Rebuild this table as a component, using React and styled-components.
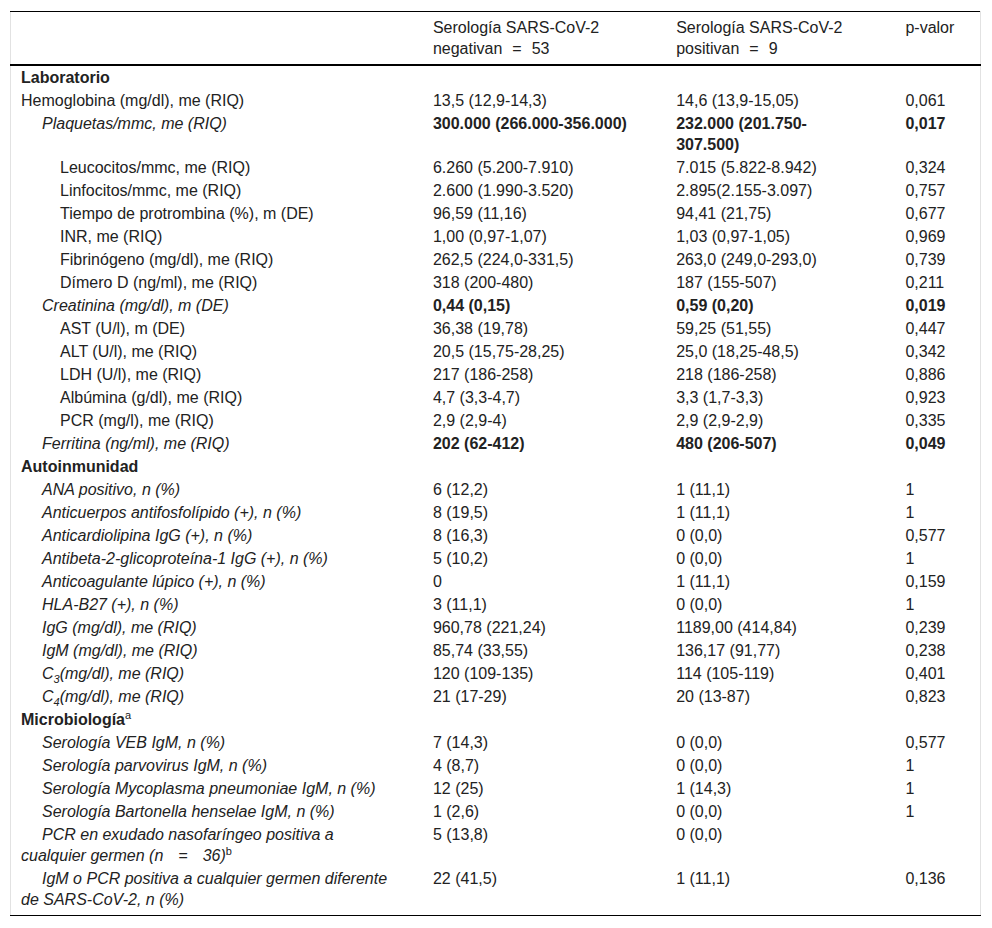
import React from "react";
import styled, {createGlobalStyle} from "styled-components";

const GlobalStyle = createGlobalStyle`
  body {
    margin: 0;
    background: #fff;
    font-family: "Liberation Sans", Arial, sans-serif;
    color: #222;
  }
`;

const Page = styled.div`
  padding: 11px 11px 12px 10px;
`;

const Table = styled.table`
  width: 971px;
  border-collapse: collapse;
  table-layout: fixed;
  font-size: 16px;
  line-height: 21px;
  border-top: 1px solid #000;
  border-bottom: 1px solid #000;
  border-left: 1px solid #e2e2e2;
  border-right: 1px solid #e2e2e2;
`;

const HeadCell = styled.th`
  font-weight: normal;
  text-align: left;
  vertical-align: top;
  padding: 5px 10px;
  border-bottom: 2px solid #000;
`;

const Cell = styled.td`
  vertical-align: top;
  padding: ${p => p.$last ? '1px 10px 5px' : '1px 10px'};
  font-weight: ${p => p.$bold ? 'bold' : 'normal'};
  &:nth-child(3) {
    padding-right: 32px;
  }
`;

const Label = styled.td`
  vertical-align: top;
  padding: ${p => p.$last ? '1px 22px 5px 10px' : '1px 22px 1px 10px'};
  font-weight: ${p => p.$kind === 'section' ? 'bold' : 'normal'};
  font-style: ${p => p.$kind === 'italic' ? 'italic' : 'normal'};
  text-indent: ${p => p.$kind === 'italic' ? '21px' : p.$kind === 'sub' ? '39px' : '0'};
`;

const Eq = styled.span`
  margin: 0 ${p => p.$wide ? '15px' : '10px'};
`;

const Sup = styled.sup`
  font-size: 11px;
  line-height: 0;
  font-weight: normal;
  font-style: normal;
`;

const Sub = styled.sub`
  font-size: 11px;
  line-height: 0;
`;

const rows = [
    {label: 'Laboratorio', kind: 'section'},
    {label: 'Hemoglobina (mg/dl), me (RIQ)', kind: 'plain', v: ['13,5 (12,9-14,3)', '14,6 (13,9-15,05)', '0,061']},
    {label: 'Plaquetas/mmc, me (RIQ)', kind: 'italic', bold: true, v: ['300.000 (266.000-356.000)', '232.000 (201.750-307.500)', '0,017']},
    {label: 'Leucocitos/mmc, me (RIQ)', kind: 'sub', v: ['6.260 (5.200-7.910)', '7.015 (5.822-8.942)', '0,324']},
    {label: 'Linfocitos/mmc, me (RIQ)', kind: 'sub', v: ['2.600 (1.990-3.520)', '2.895(2.155-3.097)', '0,757']},
    {label: 'Tiempo de protrombina (%), m (DE)', kind: 'sub', v: ['96,59 (11,16)', '94,41 (21,75)', '0,677']},
    {label: 'INR, me (RIQ)', kind: 'sub', v: ['1,00 (0,97-1,07)', '1,03 (0,97-1,05)', '0,969']},
    {label: 'Fibrinógeno (mg/dl), me (RIQ)', kind: 'sub', v: ['262,5 (224,0-331,5)', '263,0 (249,0-293,0)', '0,739']},
    {label: 'Dímero D (ng/ml), me (RIQ)', kind: 'sub', v: ['318 (200-480)', '187 (155-507)', '0,211']},
    {label: 'Creatinina (mg/dl), m (DE)', kind: 'italic', bold: true, v: ['0,44 (0,15)', '0,59 (0,20)', '0,019']},
    {label: 'AST (U/l), m (DE)', kind: 'sub', v: ['36,38 (19,78)', '59,25 (51,55)', '0,447']},
    {label: 'ALT (U/l), me (RIQ)', kind: 'sub', v: ['20,5 (15,75-28,25)', '25,0 (18,25-48,5)', '0,342']},
    {label: 'LDH (U/l), me (RIQ)', kind: 'sub', v: ['217 (186-258)', '218 (186-258)', '0,886']},
    {label: 'Albúmina (g/dl), me (RIQ)', kind: 'sub', v: ['4,7 (3,3-4,7)', '3,3 (1,7-3,3)', '0,923']},
    {label: 'PCR (mg/l), me (RIQ)', kind: 'sub', v: ['2,9 (2,9-4)', '2,9 (2,9-2,9)', '0,335']},
    {label: 'Ferritina (ng/ml), me (RIQ)', kind: 'italic', bold: true, v: ['202 (62-412)', '480 (206-507)', '0,049']},
    {label: 'Autoinmunidad', kind: 'section'},
    {label: 'ANA positivo, n (%)', kind: 'italic', v: ['6 (12,2)', '1 (11,1)', '1']},
    {label: 'Anticuerpos antifosfolípido (+), n (%)', kind: 'italic', v: ['8 (19,5)', '1 (11,1)', '1']},
    {label: 'Anticardiolipina IgG (+), n (%)', kind: 'italic', v: ['8 (16,3)', '0 (0,0)', '0,577']},
    {label: 'Antibeta-2-glicoproteína-1 IgG (+), n (%)', kind: 'italic', v: ['5 (10,2)', '0 (0,0)', '1']},
    {label: 'Anticoagulante lúpico (+), n (%)', kind: 'italic', v: ['0', '1 (11,1)', '0,159']},
    {label: 'HLA-B27 (+), n (%)', kind: 'italic', v: ['3 (11,1)', '0 (0,0)', '1']},
    {label: 'IgG (mg/dl), me (RIQ)', kind: 'italic', v: ['960,78 (221,24)', '1189,00 (414,84)', '0,239']},
    {label: 'IgM (mg/dl), me (RIQ)', kind: 'italic', v: ['85,74 (33,55)', '136,17 (91,77)', '0,238']},
    {label: <>C<Sub>3</Sub>(mg/dl), me (RIQ)</>, kind: 'italic', v: ['120 (109-135)', '114 (105-119)', '0,401']},
    {label: <>C<Sub>4</Sub>(mg/dl), me (RIQ)</>, kind: 'italic', v: ['21 (17-29)', '20 (13-87)', '0,823']},
    {label: <>Microbiología<Sup>a</Sup></>, kind: 'section'},
    {label: 'Serología VEB IgM, n (%)', kind: 'italic', v: ['7 (14,3)', '0 (0,0)', '0,577']},
    {label: 'Serología parvovirus IgM, n (%)', kind: 'italic', v: ['4 (8,7)', '0 (0,0)', '1']},
    {label: 'Serología Mycoplasma pneumoniae IgM, n (%)', kind: 'italic', v: ['12 (25)', '1 (14,3)', '1']},
    {label: 'Serología Bartonella henselae IgM, n (%)', kind: 'italic', v: ['1 (2,6)', '0 (0,0)', '1']},
    {label: <>PCR en exudado nasofaríngeo positiva a cualquier germen (n<Eq $wide>=</Eq>36)<Sup>b</Sup></>, kind: 'italic', v: ['5 (13,8)', '0 (0,0)', '']},
    {label: 'IgM o PCR positiva a cualquier germen diferente de SARS-CoV-2, n (%)', kind: 'italic', v: ['22 (41,5)', '1 (11,1)', '0,136']},
];

const App = () => {
    return <Page>
        <GlobalStyle/>
        <Table>
            <colgroup>
                <col style={{width: '412px'}}/>
                <col style={{width: '243px'}}/>
                <col style={{width: '229px'}}/>
                <col style={{width: '85px'}}/>
            </colgroup>
            <thead>
            <tr>
                <HeadCell/>
                <HeadCell>Serología SARS-CoV-2<br/>negativan<Eq>=</Eq>53</HeadCell>
                <HeadCell>Serología SARS-CoV-2<br/>positivan<Eq>=</Eq>9</HeadCell>
                <HeadCell>p-valor</HeadCell>
            </tr>
            </thead>
            <tbody>
            {rows.map((r, i) => {
                const last = i === rows.length - 1;
                return <tr key={i}>
                    <Label $kind={r.kind} $last={last}>{r.label}</Label>
                    {(r.v || ['', '', '']).map((v, j) =>
                        <Cell key={j} $bold={r.bold} $last={last}>{v}</Cell>
                    )}
                </tr>;
            })}
            </tbody>
        </Table>
    </Page>;
}

export default App;
